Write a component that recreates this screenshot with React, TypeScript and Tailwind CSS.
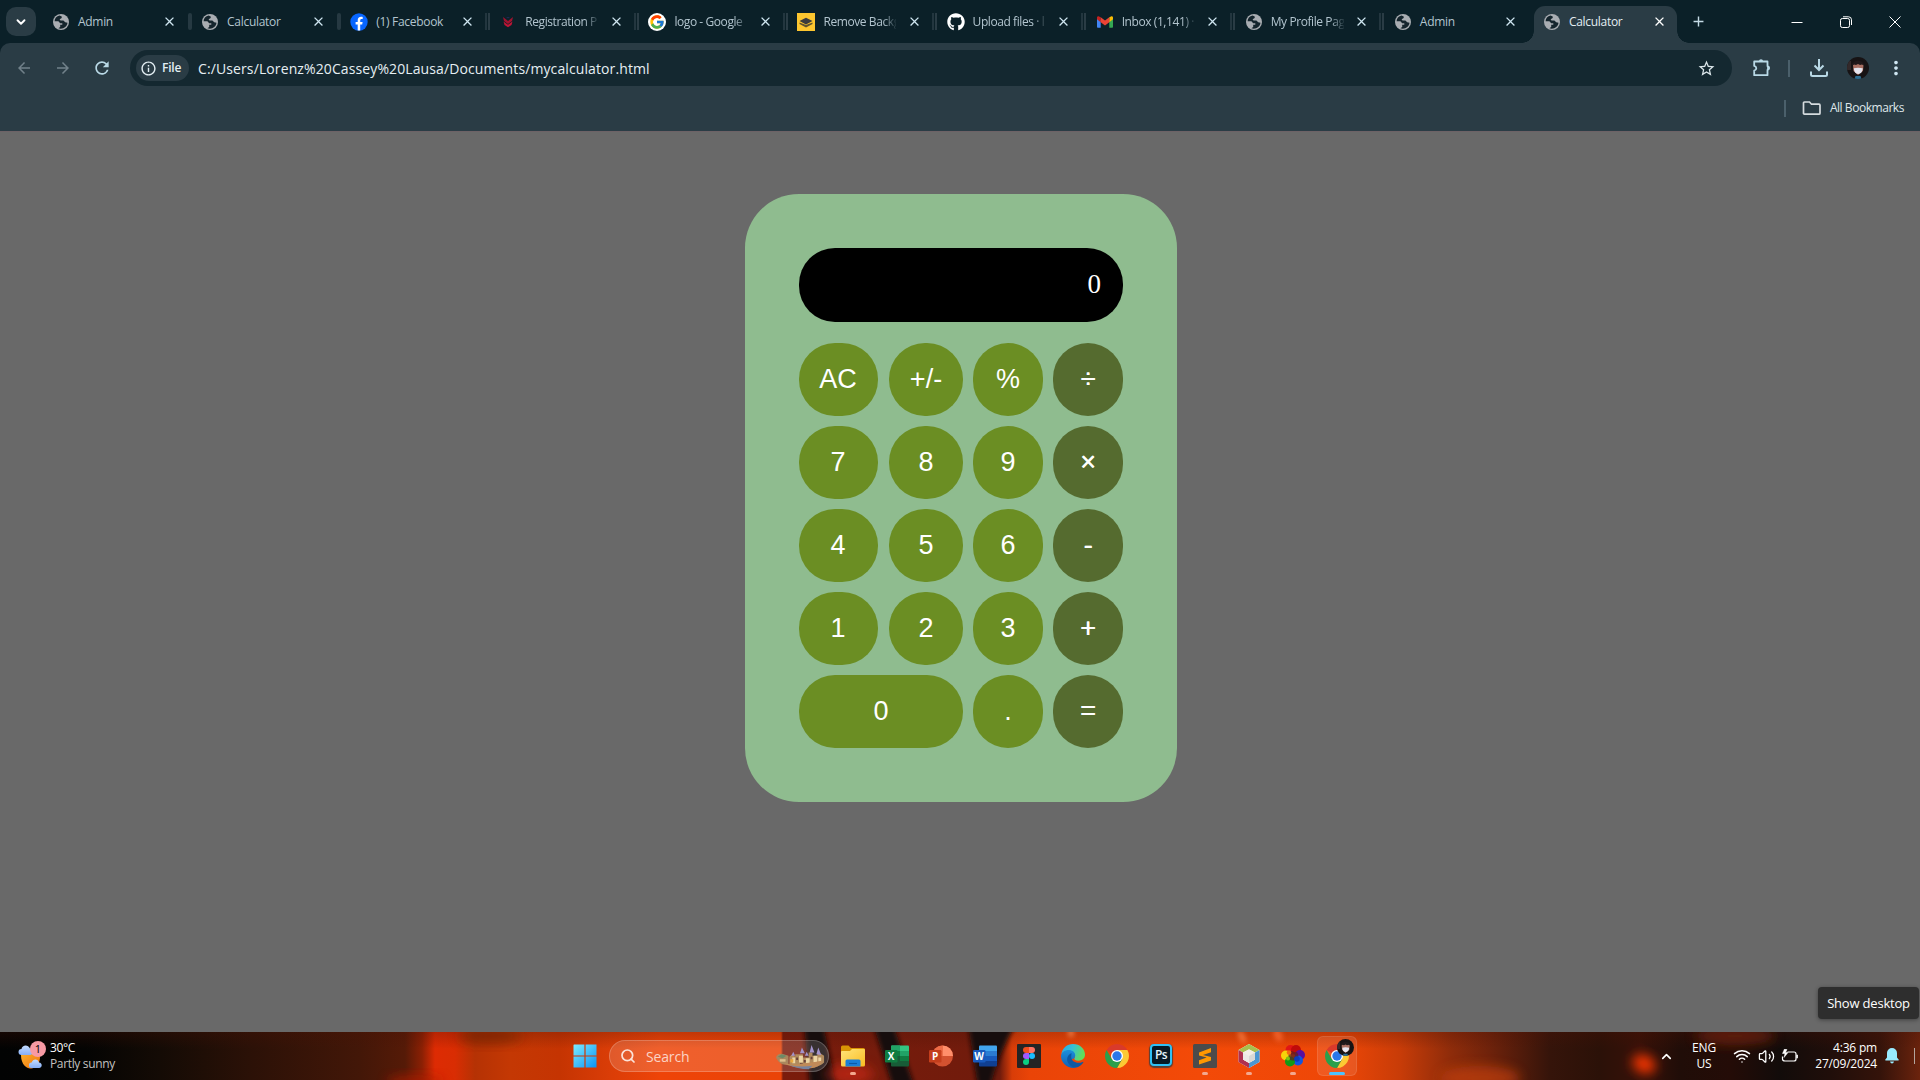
import React from "react";
import {
  MdArrowBack, MdArrowForward, MdRefresh, MdInfoOutline, MdStarBorder,
  MdMoreVert, MdClose, MdAdd,
} from "react-icons/md";
import { FaGithub } from "react-icons/fa";
import { FcGoogle } from "react-icons/fc";
import { ChevronDown, ChevronUp, Search, Volume2, Wifi } from "lucide-react";

const Globe = () => (
  <svg viewBox="0 0 18 18" className="size-[18px] shrink-0">
    <circle cx="9" cy="9" r="8" fill="#a9adb2" />
    <path
      d="M7.600 2.600C4.500 3.200 2.600 5.700 2.600 8.300H6.400L8.200 10.200H10.300V11.700H8.200V14L6.400 15.300Q9 16 11.200 15.200C13.800 14.200 15.400 12 15.500 9.800L13.200 9.300 11.400 7.500H8.500L7.600 6.300 9.700 5V3.500z"
      fill="#15252d"
    />
  </svg>
);

const FacebookIcon = () => (
  <svg viewBox="0 0 18 18" className="size-[18px]">
    <circle cx="9" cy="9" r="8.7" fill="#0866ff" />
    <path d="M7.7 17.6v-6H5.6V9h2.1V7.4c0-2.5 1.2-3.7 3.5-3.7.5 0 1.2.1 1.5.2v2.2h-1c-1.1 0-1.5.5-1.5 1.5V9h2.4l-.4 2.6h-2v6z" fill="#fff" />
  </svg>
);

const RegistrationIcon = () => (
  <svg viewBox="0 0 18 18" className="size-[18px]">
    <path d="M4 4l5 4 5-4-1 4-4 3-4-3z" fill="#a3122f" />
    <path d="M4.5 8.500l4.500 3.300 4.500-3.300-1 3.500L9 14.300 5.500 12z" fill="#c01536" />
    <path d="M7 4l2 1.500L11 4z" fill="#1d2a52" />
  </svg>
);

const GoogleIcon = () => (
  <div className="flex size-[18px] items-center justify-center rounded-full bg-white">
    <FcGoogle className="size-[16px]" />
  </div>
);

const LayersIcon = () => (
  <svg viewBox="0 0 18 18" className="size-[18px]">
    <rect width="18" height="18" fill="#fdc62f" />
    <path d="M2.500 9.500L9 12l6.500-2.500V11L9 14.500 2.500 11z" fill="#5f5330" />
    <path d="M2.500 8L9 4.800 15.500 8 9 11.500z" fill="#3a3b3e" />
  </svg>
);

const GmailIcon = () => (
  <svg viewBox="0 0 18 18" className="size-[18px]">
    <path d="M1 5v8.700c0 .7.500 1.100 1.100 1.100h2.600V7z" fill="#4285f4" />
    <path d="M17 5v8.700c0 .7-.5 1.100-1.100 1.100h-2.600V7z" fill="#34a853" />
    <path d="M13.300 4.200L15 3.400c1-.5 2 .1 2 1.300v1.600l-3.700 2.900z" fill="#fbbc04" />
    <path d="M4.700 4.200L3 3.400c-1-.5-2 .1-2 1.300v1.600l3.700 2.900z" fill="#c5221f" />
    <path d="M4.700 9.200v-5L9 7.500l4.300-3.300v5L9 12.500z" fill="#ea4335" />
  </svg>
);

type Tab = { title: string; icon: React.ReactNode; sep: "solid" | "double" | "none"; fade?: boolean };
const tabs: Tab[] = [
  { title: "Admin", icon: <Globe />, sep: "solid" },
  { title: "Calculator", icon: <Globe />, sep: "solid" },
  { title: "(1) Facebook", icon: <FacebookIcon />, sep: "double" },
  { title: "Registration P", icon: <RegistrationIcon />, sep: "double", fade: true },
  { title: "logo - Google", icon: <GoogleIcon />, sep: "double", fade: true },
  { title: "Remove Backg", icon: <LayersIcon />, sep: "double", fade: true },
  { title: "Upload files · l", icon: <FaGithub className="size-[18px] text-white" />, sep: "double", fade: true },
  { title: "Inbox (1,141) ·", icon: <GmailIcon />, sep: "double", fade: true },
  { title: "My Profile Pag", icon: <Globe />, sep: "double", fade: true },
  { title: "Admin", icon: <Globe />, sep: "none" },
];

function TabLabel({ title, bright, fade }: { title: string; bright?: boolean; fade?: boolean }) {
  return (
    <span
      className={
        "ml-2 w-[73px] shrink-0 whitespace-nowrap text-[12px] leading-[18px] " +
        (fade
          ? "tracking-[-0.420px] [mask-image:linear-gradient(to_right,#000_82%,transparent_102%)] "
          : "tracking-[-0.300px] ") +
        (bright ? "text-[#e3edf2]" : "text-[#b3c5cf]")
      }
    >
      {title}
    </span>
  );
}

function TabStrip() {
  return (
    <div className="flex h-[43px] bg-[#0b2028] pl-1.5">
      <div className="mt-[7px] flex h-[29px] w-[30px] items-center justify-center rounded-[10px] bg-[#2a3c45]">
        <ChevronDown className="size-[14px] text-white" strokeWidth={3.2} />
      </div>
      <div className="ml-[7px] flex">
        {tabs.map((t, i) => (
          <div key={i} className="flex h-[43px] w-[149.1px] items-center pl-[9px]">
            <span className="flex w-[18px] shrink-0 justify-center">{t.icon}</span>
            <TabLabel title={t.title} fade={t.fade} />
            <MdClose className="ml-[10.5px] size-[15px] shrink-0 text-[#cfe6f1]" />
            {t.sep === "solid" && <span className="ml-[11px] h-[17px] w-1 rounded-sm bg-[#263942]" />}
            {t.sep === "double" && (
              <span className="ml-[10px] flex h-[17px] gap-px">
                <i className="w-[2px] bg-[#23363f]" />
                <i className="w-[2px] bg-[#2a3c45]" />
              </span>
            )}
          </div>
        ))}
      </div>
      <div className="relative mt-1.5 flex h-[37px] w-[143px] items-center rounded-t-[11px] bg-[#2a3c45] pb-1.5 pl-[9px]">
        <span className="absolute bottom-0 -left-3 size-3 bg-[radial-gradient(circle_at_0_0,transparent_11.500px,#2a3c45_12px)]" />
        <span className="absolute -right-3 bottom-0 size-3 bg-[radial-gradient(circle_at_100%_0,transparent_11.500px,#2a3c45_12px)]" />
        <Globe />
        <TabLabel title="Calculator" bright />
        <MdClose className="ml-[10px] size-[15px] shrink-0 text-white" />
      </div>
      <MdAdd className="mt-[13px] ml-[13px] size-[17px] text-[#c5dbe6]" />
      <div className="ml-auto flex items-center gap-[37px] pr-[19px] text-white">
        <svg viewBox="0 0 12 12" className="size-3" fill="none" stroke="currentColor"><path d="M.5 6.500h11" /></svg>
        <svg viewBox="0 0 12 12" className="size-3" fill="none" stroke="currentColor">
          <rect x=".5" y="2.500" width="9" height="9" rx="1.800" />
          <path d="M3 .8h5.500a3 3 0 0 1 3 3V9" />
        </svg>
        <svg viewBox="0 0 12 12" className="size-3" fill="none" stroke="currentColor"><path d="M.5.5l11 11M11.500.5l-11 11" /></svg>
      </div>
    </div>
  );
}

function Avatar({ className }: { className: string }) {
  return (
    <svg viewBox="0 0 22 22" className={className}>
      <clipPath id="face"><circle cx="11" cy="11" r="11" /></clipPath>
      <g clipPath="url(#face)">
        <rect width="22" height="22" fill="#171314" />
        <rect x="0" y="4" width="4" height="9" fill="#33292a" />
        <path d="M6 8c1-2 9-2 10.500 0l-.5 6-5 4-4.500-4z" fill="#a96f62" />
        <path d="M5 8.500C5 2 17 2 17 8.500l-2-1-2 .5-2-1-2 1-2-.5z" fill="#20181a" />
        <path d="M6.800 11.300L11 10.800l4.700.5c0 3.500-2 5.700-4.500 5.700s-4.200-2.200-4.400-5.700z" fill="#e4e4ee" />
        <path d="M8.500 19h5l1 3h-7z" fill="#2b6c92" />
      </g>
    </svg>
  );
}

function Toolbar() {
  return (
    <div className="h-[88px] bg-[#0b2028]">
      <div className="h-full rounded-t-[10px] bg-[#2a3c45] pt-[7px]">
        <div className="flex h-9 items-center">
          <MdArrowBack className="ml-[15px] size-[18px] text-[#71818a]" />
          <MdArrowForward className="ml-[21px] size-[18px] text-[#71818a]" />
          <MdRefresh className="ml-[20px] size-[20px] text-[#b9d9e6]" />
          <div className="ml-[18px] flex h-9 w-[1602px] items-center rounded-full bg-[#142830] pr-4 pl-1.5">
            <div className="flex h-[26px] w-[53px] items-center rounded-full bg-[#2a3c45] pl-1">
              <MdInfoOutline className="size-[17px] text-[#e3eef3]" />
              <span className="ml-[5px] text-[12px] font-semibold tracking-[-0.200px] text-[#e3eef3]">File</span>
            </div>
            <span className="ml-[9px] text-[14px] tracking-[0.110px] whitespace-nowrap text-[#e6eff3]">
              C:/Users/Lorenz%20Cassey%20Lausa/Documents/mycalculator.html
            </span>
            <MdStarBorder className="ml-auto size-[19px] text-[#dbe6ea]" />
          </div>
          <svg viewBox="0 0 20 20" className="ml-[20px] size-5" fill="none" stroke="#b9d9e6" strokeWidth="1.800" strokeLinejoin="round">
            <path d="M2.200 3.500h13.300V8.200a1.900 1.900 0 0 1 0 3.700v5.300H2.200v-4.600c2.800-.7 2.800-4 0-4.700z" />
            <path d="M7 3.200a2 1.800 0 0 1 4 0z" fill="#b9d9e6" stroke="none" transform="translate(0 -.2)" />
            <path d="M16 8.500a1.700 1.700 0 0 1 0 3z" fill="#b9d9e6" />
          </svg>
          <span className="ml-[16px] h-[17px] w-[2px] bg-[#4b606b]" />
          <svg viewBox="0 0 18 18" className="ml-[20px] size-[18px]" fill="none" stroke="#b9d9e6" strokeWidth="2">
            <path d="M9 0v10.500M4.500 6.500L9 11l4.500-4.500M1 12.500V15.500q0 1.500 1.500 1.500h13q1.500 0 1.500-1.500V12.500" />
          </svg>
          <Avatar className="ml-[19px] size-[22px]" />
          <MdMoreVert className="ml-[16px] size-[22px] text-[#cfe6f1]" />
        </div>
        <div className="mt-[13px] flex h-[18px] items-center justify-end pr-[16px]">
          <span className="mr-[16px] h-[17px] w-[2px] bg-[#4b606b]" />
          <svg viewBox="0 0 20 16" className="mr-[8px] h-4 w-5" fill="none" stroke="#d5dbde" strokeWidth="1.700">
            <path d="M2.500 2h5l2 2.200h7.500q1 0 1 1v8q0 1-1 1H2.500q-1 0-1-1V3q0-1 1-1z" />
          </svg>
          <span className="text-[12px] leading-[18px] tracking-[-0.450px] text-[#dfe7ea]">All Bookmarks</span>
        </div>
      </div>
    </div>
  );
}

type Key = { label: string; op?: boolean; wide?: boolean; narrow?: boolean };
const keys: Key[] = [
  { label: "AC", narrow: true }, { label: "+/-" }, { label: "%" }, { label: "÷", op: true },
  { label: "7", narrow: true }, { label: "8" }, { label: "9" }, { label: "×", op: true },
  { label: "4", narrow: true }, { label: "5" }, { label: "6" }, { label: "-", op: true },
  { label: "1", narrow: true }, { label: "2" }, { label: "3" }, { label: "+", op: true },
  { label: "0", wide: true }, { label: "." }, { label: "=", op: true },
];

function Calculator() {
  return (
    <div className="mt-[62px] ml-[745px] h-[608px] w-[432px] rounded-[54px] bg-[#8fbc8f] p-[54px]">
      <div className="flex h-[74px] items-center justify-end rounded-[36px] bg-black pr-[22px] font-['Liberation_Serif',serif] text-[27px] text-white">
        <span className="-mt-0.5">0</span>
      </div>
      <div className="mt-[21px] grid auto-rows-[73px] grid-cols-[80px_74px_70px_70px] gap-[10px]">
        {keys.map((k) => (
          <button
            key={k.label}
            className={
              "rounded-[36px] pb-px font-['Liberation_Sans',sans-serif] text-[27px] text-white " +
              (k.wide ? "col-span-2 " : "") +
              (k.narrow ? "mr-px pr-px " : "") +
              (k.op ? "bg-[#556b2f] [text-shadow:0.400px_0.400px_0_#fff]" : "bg-[#6b8e23]")
            }
          >
            {k.label}
          </button>
        ))}
      </div>
    </div>
  );
}

const WeatherIcon = () => (
  <svg viewBox="0 0 28 30" className="h-[30px] w-7">
    <defs>
      <linearGradient id="sun" x1="0" y1="0" x2="1" y2="1"><stop stopColor="#fbb32c" /><stop offset="1" stopColor="#f0720f" /></linearGradient>
      <linearGradient id="cl" x1="0" y1="0" x2="0" y2="1"><stop stopColor="#c3dcff" /><stop offset="1" stopColor="#86aef5" /></linearGradient>
    </defs>
    <path d="M3 14c0-6 20-6 19 3s-7 10.500-10 10.500S3 24 3 14z" fill="url(#sun)" />
    <path d="M3.500 14A3 3 0 0 1 3.500 8C4 4 10 3 12 7.500c3 0 3.500 6.500 0 6.500z" fill="url(#cl)" />
    <path d="M13.500 27a2.700 2.700 0 0 1 .2-5.400c1-4 6.500-4 7.300 0 3.500.2 3.800 5.400 0 5.400z" fill="url(#cl)" />
    <circle cx="20" cy="8" r="8" fill="#f79aa4" />
  </svg>
);

const Castle = () => (
  <svg viewBox="0 0 54 30" className="h-[25px] w-[52px]" preserveAspectRatio="none">
    <path d="M2 15q2-6 8-4l5 2v10q-8 3-13-8z" fill="#a8875e" />
    <path d="M4 14l4-3 5 2-4 3z" fill="#6d8a67" />
    <path d="M6 17h6v3H6z" fill="#dcc08c" />
    <path d="M16 23V14l3-3 3 3v-3h8v4h6V9h4v4h5v-3h3l4 3v8q-4 5-10 5H22z" fill="#b08a5d" />
    <path d="M19 15h3v7h-3zM26 13h4v8h-4zM33 16h4v6h-4zM41 13h4v8h-4zM46 15h3v5h-3z" fill="#ecd5a3" />
    <path d="M23 15h2v3h-2zM31 18h2v3h-2zM38 14h2v3h-2zM27 22h3v2h-3z" fill="#654039" />
    <path d="M18 13l2-5 2 5zM27 10l2-7 3 7zM37 9l2-9 3 9zM32 13l2-5 2 5zM44 11l2-8 3 9z" fill="#a393cb" />
    <path d="M10 22q8 2 16 1t24-4q-3 9-12 9-20 0-28-6z" fill="#c08a58" />
    <path d="M16 24q10 3 24 1l-4 4q-12 0-20-5z" fill="#77839f" />
    <path d="M17 17h3v4h-3z" fill="#e8a73e" />
  </svg>
);

const WindowsLogo = () => (
  <svg viewBox="0 0 24 24" className="size-6">
    <linearGradient id="wn" x1="0" y1="0" x2="1" y2="1"><stop stopColor="#7cecff" /><stop offset="1" stopColor="#0a93f5" /></linearGradient>
    <path d="M1 .5h10.400v10.900H.5V1zM12.600.5h10.900v10.900H12.600zM.5 12.600h10.900v10.900H.5zM12.600 12.600h10.900v10.900H12.600z" fill="url(#wn)" />
  </svg>
);

const FolderIcon = () => (
  <svg viewBox="0 0 24 24" className="size-6">
    <linearGradient id="fo" x1="0" y1="0" x2="1" y2="1"><stop stopColor="#ffe57a" /><stop offset="1" stopColor="#f9bc22" /></linearGradient>
    <path d="M0 3q0-1.500 1.500-1.500h6L10 4h12.500Q24 4 24 5.500V10H0z" fill="#d99405" />
    <path d="M0 8q0-1 1-1h8l2-2h12q1 0 1 1v15q0 1.500-1.500 1.500h-21Q0 22.500 0 21z" fill="url(#fo)" />
    <path d="M4.500 22.500V17q0-1.500 1.500-1.500h12q1.500 0 1.500 1.500v5.500z" fill="#1a7fd6" />
    <path d="M8 19.500h8" stroke="#0c5ba8" strokeWidth="1.200" />
  </svg>
);

function OfficeIcon({ letter, badge, bands }: { letter: string; badge: string; bands: string[] }) {
  return (
    <svg viewBox="0 0 24 24" className="size-6">
      {bands.length === 4 && (
        <g>
          <path d="M6 6V2.500q0-1 1-1h16q1 0 1 1V7H6z" fill={bands[0]} />
          <path d="M6 7h18v5H6z" fill={bands[1]} />
          <path d="M6 12h18v5H6z" fill={bands[2]} />
          <path d="M6 17h18v4.500q0 1-1 1H7q-1 0-1-1z" fill={bands[3]} />
        </g>
      )}
      {letter === "X" && (
        <g><path d="M6 7V2.500q0-1 1-1h8V7z" fill="#21a366" /><path d="M6 7h9v5H6z" fill="#107c41" /><path d="M15 12h9v5h-9z" fill="#107c41" /></g>
      )}
      {letter === "P" && (
        <g>
          <circle cx="13.500" cy="12" r="10.500" fill="#d35230" />
          <path d="M13.500 1.500A10.500 10.500 0 0 1 24 12H13.500z" fill="#ff8f6b" />
          <path d="M13.500 1.500A10.500 10.500 0 0 0 3 12h10.500z" fill="#ed6c47" />
        </g>
      )}
      <rect x="0" y="6" width="12.500" height="12.500" rx="1.200" fill={badge} />
      <text x="6.200" y="15.800" textAnchor="middle" fontSize="10" fontWeight="700" fill="#fff" fontFamily="Open Sans, sans-serif">{letter}</text>
    </svg>
  );
}

const FigmaIcon = () => (
  <svg viewBox="0 0 24 24" className="size-6">
    <rect width="24" height="24" rx="1" fill="#242424" />
    <path d="M12 3H9a3 3 0 0 0 0 6h3z" fill="#f24e1e" />
    <path d="M12 3h3a3 3 0 0 1 0 6h-3z" fill="#ff7262" />
    <path d="M12 9H9a3 3 0 0 0 0 6h3z" fill="#a259ff" />
    <circle cx="15" cy="12" r="3" fill="#1abcfe" />
    <path d="M12 15H9a3 3 0 1 0 3 3z" fill="#0acf83" />
  </svg>
);

const EdgeIcon = () => (
  <svg viewBox="0 0 24 24" className="size-6">
    <defs>
      <linearGradient id="e1" x1="0" y1="0" x2="1" y2=".3"><stop stopColor="#2aa5e4" /><stop offset=".5" stopColor="#35c1d6" /><stop offset="1" stopColor="#62dd5a" /></linearGradient>
      <linearGradient id="e2" x1="0" y1="0" x2="0" y2="1"><stop stopColor="#1b8fdc" /><stop offset="1" stopColor="#0f5fb5" /></linearGradient>
    </defs>
    <path d="M.2 10.500C1.500 4 6 0 12 0c7 0 12 5 12 10.500 0 4-3 6.200-6.500 6.200-3 0-4.500-1.200-4.200-2.200 1.500-1.700 1-5-1.800-6C8 7 2 7 .2 10.500z" fill="url(#e1)" />
    <path d="M0 12c.5-4 4-6 7.500-6 5 0 7.500 3.500 6.500 6.500-.3 1-.7 1-.7 2-3 0-5 2.500-3.300 5.500 1.200 2.200 3.500 3.600 5.500 3.600C8 25.500 0 20 0 12z" fill="url(#e2)" />
    <path d="M10.500 9C6 11 5 16 7.500 19.500c2 3 5 4.300 7.500 4.100 3-.7 5.700-2.600 7.300-5.200.3-.5-.2-.7-.6-.5-5.500 2.300-11.500-.3-11.500-4.900z" fill="#0c59a4" />
  </svg>
);

const ChromeIcon = () => (
  <svg viewBox="0 0 24 24" className="size-6">
    <path d="M12 12L1.610 6A12 12 0 0 1 22.390 6z" fill="#d93a2b" />
    <path d="M12 12V6h10.390A12 12 0 0 1 12 24l5.200-9z" fill="#fcc934" />
    <path d="M12 12l5.200 3L12 24A12 12 0 0 1 1.610 6l5.190 9z" fill="#2b9f4b" />
    <circle cx="12" cy="12" r="6" fill="#fff" />
    <circle cx="12" cy="12" r="4.700" fill="#2b77ea" />
  </svg>
);

const PhotoshopIcon = () => (
  <div className="-mt-0.5 flex size-[22px] items-center justify-center rounded-[4px] border-2 border-[#2fc0f5] bg-[#071a26] shadow-[0_1px_1px_1px_#5b3f35]">
    <span className="text-[12px] leading-none font-semibold tracking-[-0.500px] text-[#e3f5fd]">Ps</span>
  </div>
);

const SublimeIcon = () => (
  <svg viewBox="0 0 24 24" className="size-6">
    <rect width="24" height="24" rx="1.500" fill="#4b4b4b" />
    <path d="M6 8.500L18 4v4.300l-8 2.800 8 2v3.500L6 20.500v-4.300l7.700-2.700L6 11.500z" fill="#ff9800" />
  </svg>
);

const CubeIcon = () => (
  <svg viewBox="0 0 24 24" className="size-6">
    <path d="M12 0l10.500 6v12L12 24 1.500 18V6z" fill="#fff" />
    <path d="M12 0l10.500 6L18 8.500 12 5.500 6 8.500 1.500 6z" fill="#a9bf4e" />
    <path d="M1.500 6L6 8.500v7l6 3.300V24L1.500 18z" fill="#b0304e" />
    <path d="M22.500 6L18 8.500v7l-6 3.300V24l10.500-6z" fill="#4a96d2" />
    <path d="M12 5.200l6 3.300v7L12 19l-6-3.500v-7z" fill="#f4eee6" />
    <path d="M12 12l6-3.500v7L12 19z" fill="#dad8d5" />
    <path d="M6 8.500l6 3.500v7l-6-3.500z" fill="#ece9e4" />
  </svg>
);

const FlowerIcon = () => (
  <svg viewBox="0 0 24 24" className="size-6">
    <circle cx="9.500" cy="6" r="5" fill="#e01515" /><circle cx="15" cy="6" r="5" fill="#c00a0a" />
    <circle cx="19" cy="11" r="5" fill="#5a0f9e" /><circle cx="17" cy="16.500" r="5" fill="#1056e0" />
    <circle cx="5" cy="11.500" r="5" fill="#f7d20a" /><circle cx="9" cy="17.500" r="5" fill="#109a16" />
    <path d="M9 8q1.500-1.500 3-.500t4 .5q2 2.500 1 6-2 3-5 2.500-3 .5-4-2.500-1.500-3.500 1-6z" fill="#5b2322" opacity=".75" />
    <circle cx="16" cy="15" r="2.800" fill="#0a3cc0" />
    <circle cx="8" cy="8.500" r="2.300" fill="#f36a10" />
    <circle cx="7" cy="14.500" r="2" fill="#7fbf10" />
  </svg>
);

const apps: { icon: React.ReactNode; running?: boolean }[] = [
  { icon: <FolderIcon />, running: true },
  { icon: <OfficeIcon letter="X" badge="#107c41" bands={["#33c481", "#21a366", "#185c37", "#185c37"]} /> },
  { icon: <OfficeIcon letter="P" badge="#c43e1c" bands={[]} /> },
  { icon: <OfficeIcon letter="W" badge="#185abd" bands={["#41a5ee", "#2b7cd3", "#185abd", "#103f91"]} /> },
  { icon: <FigmaIcon /> },
  { icon: <EdgeIcon /> },
  { icon: <ChromeIcon /> },
  { icon: <PhotoshopIcon /> },
  { icon: <SublimeIcon />, running: true },
  { icon: <CubeIcon />, running: true },
  { icon: <FlowerIcon />, running: true },
];

/* Blurred wallpaper bands that show through the translucent bar. */
const Wallpaper = () => (
  <svg viewBox="0 0 1920 48" className="absolute inset-0 h-12 w-[1920px]">
    <defs>
      <filter id="b2" x="-20%" width="140%"><feGaussianBlur stdDeviation="2.500" /></filter>
      <filter id="b6" x="-50%" width="200%" y="-50%" height="200%"><feGaussianBlur stdDeviation="6" /></filter>
    </defs>
    <g filter="url(#b2)">
      <path d="M804-8h19l14 64h-27z" fill="#180d0b" />
      <path d="M873-8h20l22 64h-22z" fill="#160e0b" />
      <path d="M968-8h48q-18 30-26 64h-12z" fill="#160e0a" />
    </g>
    <ellipse cx="850" cy="42" rx="24" ry="10" fill="#d32a12" opacity=".65" filter="url(#b6)" />
    <ellipse cx="415" cy="50" rx="28" ry="7" fill="#b01c04" opacity=".7" filter="url(#b6)" />
    <ellipse cx="490" cy="4" rx="32" ry="8" fill="#6d2005" opacity=".6" filter="url(#b6)" />
    <ellipse cx="1644" cy="32" rx="12" ry="9" fill="#f53604" transform="rotate(25 1644 32)" filter="url(#b6)" />
    <ellipse cx="1480" cy="46" rx="40" ry="12" fill="#c33f0f" opacity=".7" filter="url(#b6)" />
    <ellipse cx="1735" cy="4" rx="40" ry="9" fill="#6b200d" opacity=".8" filter="url(#b6)" />
    <g filter="url(#b2)" opacity=".7">
      <ellipse cx="1071" cy="1" rx="3" ry="4" fill="#ff9a60" />
      <ellipse cx="1242" cy="5" rx="3" ry="7" fill="#ff8a50" transform="rotate(-25 1242 5)" />
      <ellipse cx="1278" cy="3" rx="4" ry="7" fill="#ff7038" transform="rotate(-25 1278 3)" />
    </g>
  </svg>
);

function Taskbar() {
  return (
    <div className="relative h-12 bg-[linear-gradient(90deg,#020303_0,#040403_85px,#140b05_160px,#2b1107_250px,#431708_360px,#551a07_405px,#8b2004_422px,#dd2b03_435px,#d92d03_455px,#b53204_475px,#c43804_510px,#c53402_560px,#da3d07_610px,#ee4408_660px,#ea4407_781px,#7a1c0c_783px,#701b0c_1000px,#d83d08_1012px,#ea4407_1030px,#f34a08_1200px,#ee4707_1340px,#c83c08_1400px,#8f2c0a_1450px,#6e220b_1490px,#35140a_1550px,#2b1108_1600px,#371108_1640px,#200d08_1680px,#240c07_1730px,#120c0a_1780px,#200e0a_1830px,#34130a_1880px,#6b230d_1920px)]">
      <div className="absolute inset-0 bg-[linear-gradient(180deg,#4a120544,transparent_35%)]" />
      <Wallpaper />
      <div className="relative flex h-full items-center">
        <div className="relative ml-[18px] h-[30px] w-7">
          <WeatherIcon />
          <span className="absolute top-0 left-4 w-2 text-center text-[11px] leading-4 text-black">1</span>
        </div>
        <div className="ml-[4px] text-[12px] leading-4 tracking-[-0.350px]">
          <div className="text-white">30°C</div>
          <div className="text-[#c4c2c0]">Partly sunny</div>
        </div>
        <div className="absolute top-0 left-[572.5px] flex h-12 items-center">
          <WindowsLogo />
          <div className="ml-[12.5px] flex h-8 w-[220px] items-center rounded-full border border-white/20 bg-white/15 pl-[10px]">
            <Search className="size-4 text-[#fbe3da]" strokeWidth={2.600} />
            <span className="ml-[10px] text-[14px] tracking-[-0.150px] text-[#fbd3c5]">Search</span>
            <span className="mt-0.5 mr-0.5 ml-auto"><Castle /></span>
          </div>
          <div className="flex">
            {apps.map((a, i) => (
              <div key={i} className="relative flex h-12 w-11 items-center justify-center pl-[4px]">
                {a.icon}
                {a.running && <i className="absolute bottom-[5px] left-[21px] h-[3px] w-[6px] rounded-full bg-[#f3a88f]" />}
              </div>
            ))}
            <div className="relative mt-1 ml-1 flex size-10 items-center justify-center rounded-md border border-white/10 bg-white/10">
              <ChromeIcon />
              <span className="absolute top-[2px] right-[2px] flex"><Avatar className="size-[17px]" /></span>
              <i className="absolute bottom-0 left-[11px] h-[3px] w-4 rounded-full bg-[#4cc2ff]" />
            </div>
          </div>
        </div>
        <div className="ml-auto flex items-center text-white">
          <ChevronUp className="size-[15px]" strokeWidth={2.600} />
          <div className="ml-[14px] w-8 text-center text-[12px] leading-4 tracking-[-0.200px]">ENG<br />US</div>
          <Wifi className="ml-[13px] size-[18px]" strokeWidth={2} />
          <Volume2 className="ml-[7px] size-[17px]" strokeWidth={1.800} />
          <svg viewBox="0 0 18 14" className="ml-[6px] h-[14px] w-[18px]" fill="none" stroke="currentColor" strokeWidth="1.200">
            <path d="M6.500 3H13q2 0 2 2v5q0 2-2 2H4q-2.500 0-2.500-2V7.500M16.300 5.700v3.600" />
            <path d="M3.500 0L1.500 4.500H4L3 8.500l4-5H4.500L6 .5z" fill="currentColor" strokeWidth=".5" />
          </svg>
          <div className="ml-2.5 w-[68px] text-right text-[12px] leading-4 tracking-[-0.200px] whitespace-nowrap">4:36 pm<br />27/09/2024</div>
          <svg viewBox="0 0 14 16" className="ml-2 h-4 w-[14px]" fill="#99ebff">
            <path d="M7 0a5 5 0 0 1 5 5v4.500l1.800 2.300q.3.700-.6.700H.8q-.9 0-.6-.7L2 9.500V5a5 5 0 0 1 5-5zM5 13.500h4q-.5 2-2 2t-2-2z" />
          </svg>
          <span className="mr-[5px] ml-[15px] h-4 w-px bg-[#b4a49d]" />
        </div>
      </div>
    </div>
  );
}

export default function App() {
  return (
    <div className="relative flex h-[1080px] w-[1920px] flex-col overflow-hidden bg-[#696969] font-['Open_Sans','Noto_Sans',sans-serif]">
      <TabStrip />
      <Toolbar />
      <main className="flex-1 border-t border-[#6d6266]">
        <Calculator />
      </main>
      <div className="absolute top-[987px] left-[1818px] flex h-8 w-[101px] items-center justify-center rounded-[4px] bg-[#2e2e2e] pt-px text-[13px] tracking-[-0.200px] whitespace-nowrap text-white shadow-[0_1px_4px_#00000066]">
        Show desktop
      </div>
      <Taskbar />
    </div>
  );
}
